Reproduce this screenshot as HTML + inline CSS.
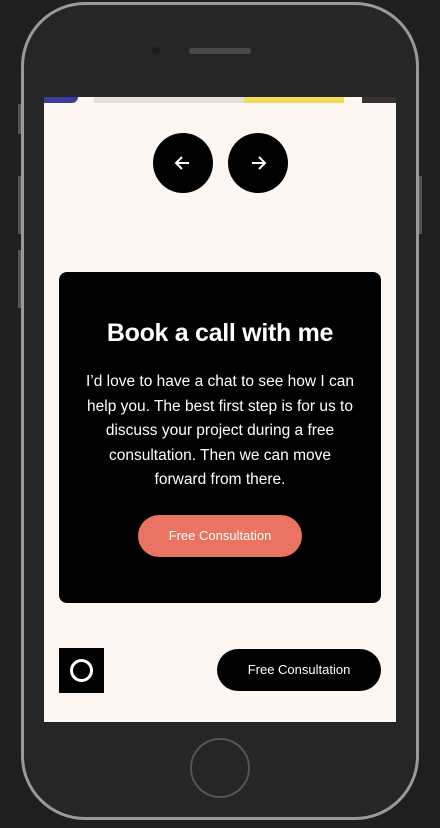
<!DOCTYPE html>
<html><head><style>
*{margin:0;padding:0;box-sizing:border-box}
body{width:440px;height:828px;background:#1f1f21;position:relative;overflow:hidden;font-family:"Liberation Sans",sans-serif}
.phone{position:absolute;left:21px;top:2px;width:398px;height:818px;border-radius:64px;border:3px solid #9a9a9a;background:#262626}
.btn{position:absolute;background:#555;width:4px}
.screen{position:absolute;left:44px;top:97px;width:352px;height:625px;background:#fdf6f1;overflow:hidden}
.strip{position:absolute;top:0;height:6px}
.c{position:absolute;width:60px;height:60px;border-radius:50%;background:#000;top:36px}
.card{position:absolute;left:15px;top:175px;width:322px;height:331px;background:#000;border-radius:8px;color:#fff;text-align:center}
h1{font-size:25px;font-weight:bold;margin-top:47px;letter-spacing:-0.3px}
p{font-size:15.5px;line-height:24.5px;margin:22px 25px 0}
.fc{position:absolute;left:79px;top:243px;width:164px;height:42px;border-radius:21px;background:#e87461;font-size:13px;line-height:42px}
.logo{position:absolute;left:15px;top:551px;width:45px;height:45px;background:#000}
.logo div{position:absolute;left:11px;top:11px;width:23px;height:23px;border:3px solid #fff;border-radius:50%}
.cta{position:absolute;left:173px;top:552px;width:164px;height:42px;border-radius:21px;background:#000;color:#fff;font-size:13px;line-height:42px;text-align:center}
</style></head><body>
<div class="btn" style="left:18px;top:104px;height:30px"></div>
<div class="btn" style="left:18px;top:176px;height:58px"></div>
<div class="btn" style="left:18px;top:250px;height:58px"></div>
<div class="btn" style="left:418px;top:176px;height:58px"></div>
<div class="phone"></div>
<div style="position:absolute;left:152px;top:47px;width:8px;height:8px;border-radius:50%;background:#1a1a1a"></div>
<div style="position:absolute;left:189px;top:48px;width:62px;height:6px;border-radius:3px;background:#4a4a4a"></div>
<div style="position:absolute;left:190px;top:738px;width:60px;height:60px;border-radius:50%;border:2px solid #555"></div>
<div class="screen">
<div class="strip" style="left:0;width:34px;background:#3c3ea0;border-radius:0 0 8px 0"></div>
<div class="strip" style="left:50px;width:150px;background:#e8dcd6"></div>
<div class="strip" style="left:200px;width:100px;background:#f3dc5a"></div>
<div class="strip" style="left:318px;width:34px;background:#3a3230"></div>
<div class="c" style="left:109px"><svg width="60" height="60"><path d="M36 30H24M29 24l-6 6 6 6" stroke="#fff" stroke-width="2" fill="none"/></svg></div>
<div class="c" style="left:184px"><svg width="60" height="60"><path d="M24 30h12M31 24l6 6-6 6" stroke="#fff" stroke-width="2" fill="none"/></svg></div>
<div class="card"><h1>Book a call with me</h1>
<p>I’d love to have a chat to see how I can help you. The best first step is for us to discuss your project during a free consultation. Then we can move forward from there.</p>
<div class="fc">Free Consultation</div></div>
<div class="logo"><div></div></div>
<div class="cta">Free Consultation</div>
</div>
</body></html>
